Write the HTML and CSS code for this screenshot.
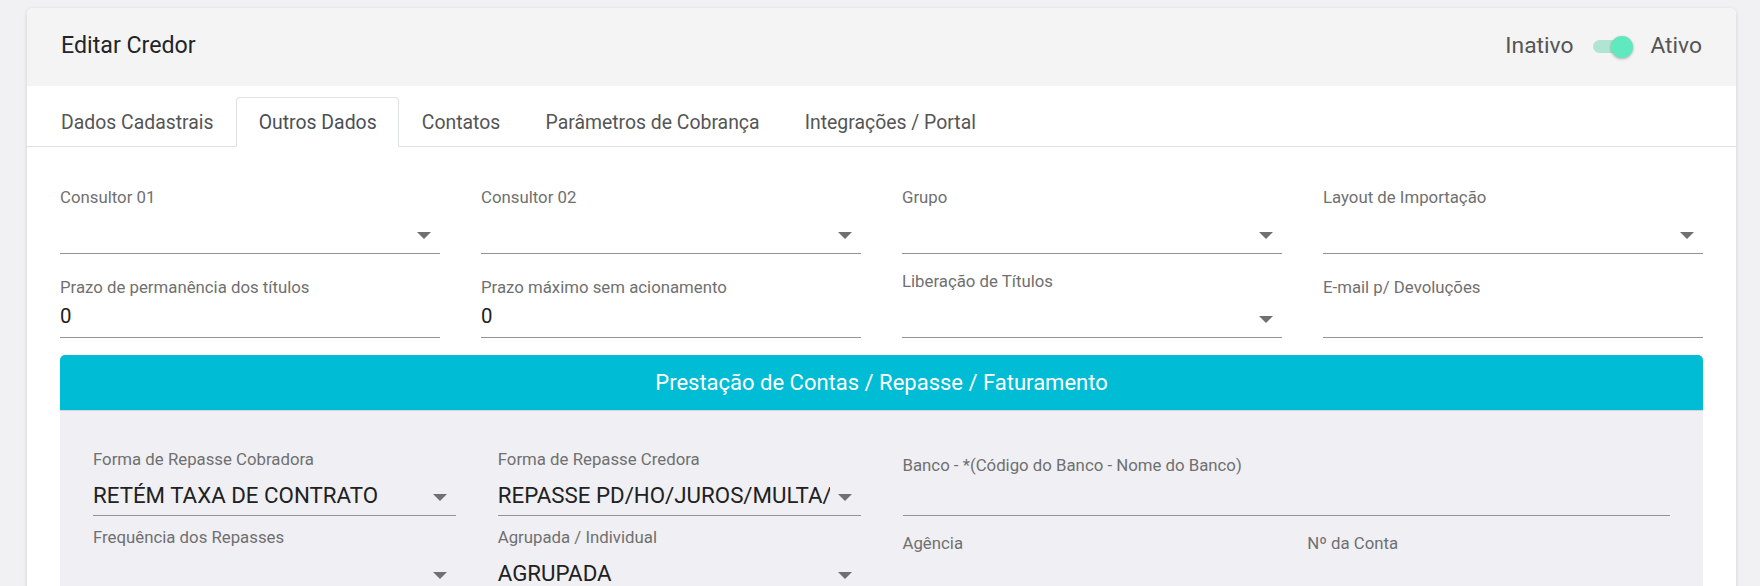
FILE: index.html
```html
<!DOCTYPE html>
<html lang="pt-BR">
<head>
<meta charset="utf-8">
<title>Editar Credor</title>
<link rel="stylesheet" href="styles.css">
</head>
<body>
<div class="page">
  <section class="card">
    <header class="card-header">
      <h1 class="card-title">Editar Credor</h1>
      <div class="status">
        <span>Inativo</span>
        <span class="switch"><span class="switch-track"></span><span class="switch-thumb"></span></span>
        <span>Ativo</span>
      </div>
    </header>

    <nav class="tabs">
      <a class="tab">Dados Cadastrais</a>
      <a class="tab active">Outros Dados</a>
      <a class="tab">Contatos</a>
      <a class="tab">Parâmetros de Cobrança</a>
      <a class="tab">Integrações / Portal</a>
    </nav>

    <div class="tab-body">
      <div class="grid">
        <div class="field select">
          <span class="field-label">Consultor 01</span>
          <div class="control"><span class="value"></span><i class="caret"></i></div>
        </div>
        <div class="field select">
          <span class="field-label">Consultor 02</span>
          <div class="control"><span class="value"></span><i class="caret"></i></div>
        </div>
        <div class="field select">
          <span class="field-label">Grupo</span>
          <div class="control"><span class="value"></span><i class="caret"></i></div>
        </div>
        <div class="field select">
          <span class="field-label">Layout de Importação</span>
          <div class="control"><span class="value"></span><i class="caret"></i></div>
        </div>

        <div class="field text">
          <span class="field-label">Prazo de permanência dos títulos</span>
          <div class="control"><span class="value">0</span></div>
        </div>
        <div class="field text">
          <span class="field-label">Prazo máximo sem acionamento</span>
          <div class="control"><span class="value">0</span></div>
        </div>
        <div class="field select">
          <span class="field-label">Liberação de Títulos</span>
          <div class="control"><span class="value"></span><i class="caret"></i></div>
        </div>
        <div class="field text">
          <span class="field-label">E-mail p/ Devoluções</span>
          <div class="control"><span class="value"></span></div>
        </div>
      </div>

      <section class="panel">
        <div class="panel-head">Prestação de Contas / Repasse / Faturamento</div>
        <div class="panel-body grid">
          <div class="field select">
            <span class="field-label">Forma de Repasse Cobradora</span>
            <div class="control big"><span class="value">RETÉM TAXA DE CONTRATO</span><i class="caret"></i></div>
          </div>
          <div class="field select">
            <span class="field-label">Forma de Repasse Credora</span>
            <div class="control big"><span class="value">REPASSE PD/HO/JUROS/MULTA/TAXAS</span><i class="caret"></i></div>
          </div>
          <div class="field text span-2">
            <span class="field-label">Banco - *(Código do Banco - Nome do Banco)</span>
            <div class="control big"><span class="value"></span></div>
          </div>

          <div class="field select">
            <span class="field-label">Frequência dos Repasses</span>
            <div class="control big"><span class="value"></span><i class="caret"></i></div>
          </div>
          <div class="field select">
            <span class="field-label">Agrupada / Individual</span>
            <div class="control big"><span class="value">AGRUPADA</span><i class="caret"></i></div>
          </div>
          <div class="field text">
            <span class="field-label">Agência</span>
            <div class="control big"><span class="value"></span></div>
          </div>
          <div class="field text">
            <span class="field-label">Nº da Conta</span>
            <div class="control big"><span class="value"></span></div>
          </div>
        </div>
      </section>
    </div>
  </section>
</div>
</body>
</html>
```

FILE: styles.css
```css
* { box-sizing: border-box; }

html, body { margin: 0; }

body {
  background: #f1f1f4;
  font-family: Roboto, "Liberation Sans", Arial, sans-serif;
  color: #212121;
}

.page { padding: 8px 24px 40px 27px; }

/* card */
.card {
  background: #fff;
  border-radius: 6px;
  box-shadow: 0 1px 4px rgba(0, 0, 0, 0.14);
  overflow: hidden;
}

.card-header {
  height: 78px;
  background: #f4f4f5;
  display: flex;
  align-items: center;
  justify-content: space-between;
  padding: 0 34px 4px;
}

.card-title {
  margin: 0;
  font-size: 23.2px;
  font-weight: 400;
  color: #212529;
}

/* active / inactive switch */
.status {
  display: flex;
  align-items: center;
  font-size: 22.8px;
  color: #555;
}

.switch {
  position: relative;
  width: 40px;
  height: 22px;
  margin: 3px 17px 0 20px;
  display: flex;
  align-items: center;
}

.switch-track {
  width: 38px;
  height: 13px;
  border-radius: 7px;
  background: #b0e5d3;
}

.switch-thumb {
  position: absolute;
  right: 0;
  top: 0;
  width: 22px;
  height: 22px;
  border-radius: 50%;
  background: #60e9be;
  box-shadow: 0 1px 3px rgba(0, 0, 0, 0.3);
}

/* tabs */
.tabs {
  display: flex;
  padding: 11px 0 0 11.4px;
  border-bottom: 1px solid #dee2e6;
}

.tab {
  height: 50px;
  margin-bottom: -1px;
  display: flex;
  align-items: center;
  padding: 0 21.6px;
  border: 1px solid transparent;
  border-radius: 4px 4px 0 0;
  font-size: 19.4px;
  color: #555;
}

.tab.active {
  background: #fff;
  border-color: #dee2e6 #dee2e6 #fff;
  color: #495057;
}

/* form */
.tab-body { padding: 40px 33px 0; }

.grid {
  display: grid;
  grid-template-columns: repeat(4, 1fr);
  column-gap: 41px;
  row-gap: 17px;
}

.field {
  display: flex;
  flex-direction: column;
  min-width: 0;
}

.span-2 { grid-column: span 2; }

.field-label {
  font-size: 16.8px;
  line-height: 20px;
  color: #707070;
  white-space: nowrap;
}

.field.text { padding-top: 6px; }
.field.select .control { margin-top: 6px; }

.control {
  height: 41px;
  border-bottom: 1px solid #949494;
  display: flex;
  align-items: center;
  font-size: 20.4px;
  color: #212121;
}

.field.text .control { padding-bottom: 3px; }

.control.big { font-size: 22.3px; }

.value {
  flex: 1;
  min-width: 0;
  overflow: hidden;
  white-space: nowrap;
  margin-right: 8px;
}

.caret {
  flex: none;
  width: 0;
  height: 0;
  margin: 4px 9px 0 0;
  border-left: 7px solid transparent;
  border-right: 7px solid transparent;
  border-top: 7px solid #707070;
}

/* billing panel */
.panel {
  margin-top: 17px;
  border-radius: 5px 5px 0 0;
  overflow: hidden;
}

.panel-head {
  height: 55px;
  background: #00bcd4;
  color: #fff;
  font-size: 22px;
  display: flex;
  align-items: center;
  justify-content: center;
}

.panel-body {
  background: #efeff4;
  border-top: 1px solid #d5d5da;
  padding: 38px 33px 30px;
  column-gap: 42px;
  row-gap: 11px;
}
```
